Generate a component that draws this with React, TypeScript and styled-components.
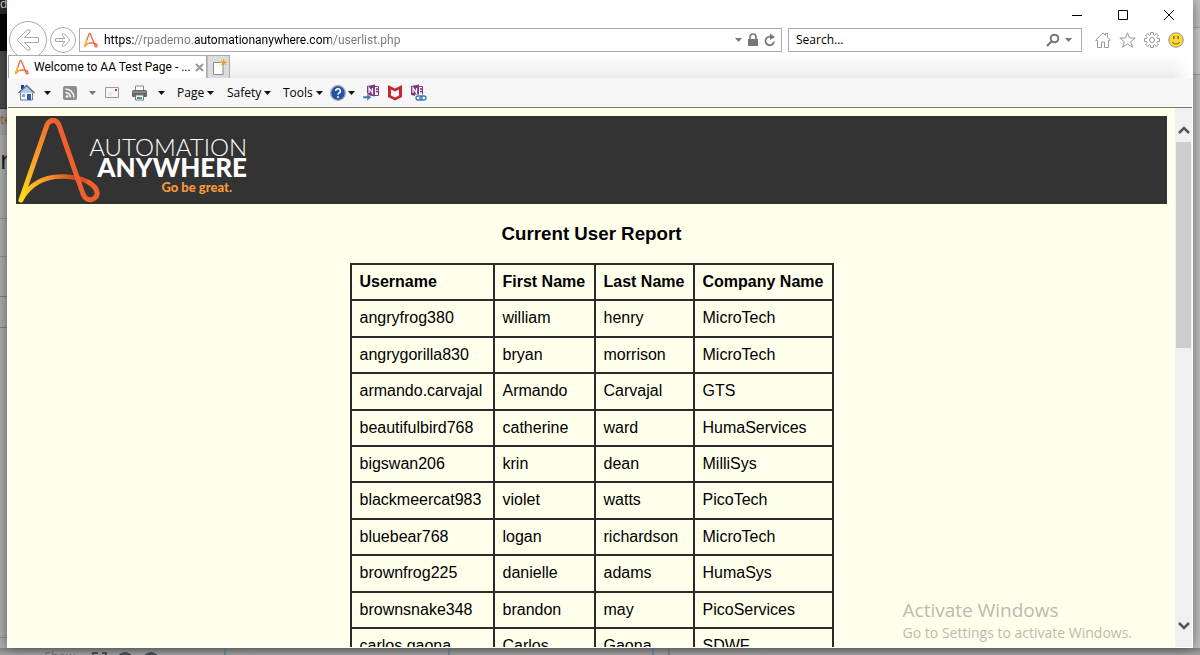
import React from "react";
import styled, { createGlobalStyle } from "styled-components";

const Global = createGlobalStyle`
  *, *::before, *::after { box-sizing: border-box; }
  body { margin: 0; overflow: hidden; background: #a2a2a2; color: #000; font-family: "Open Sans", sans-serif; }
  button { border: 0; padding: 0; margin: 0; background: transparent; color: inherit; font: inherit; }
  svg { display: block; flex: none; }
`;

const Desktop = styled.div`
  height: 100vh;
  display: grid;
  grid-template-columns: 7px minmax(0, 1fr) 7px;
  grid-template-rows: minmax(0, 1fr) 7px;
`;

const Strip = styled.div`
  display: flex;
  flex-direction: column;
  overflow: hidden;
  background: #b0b0b0;
`;

const Slice = styled.div<{ $h: number; $bg: string; $line?: string }>`
  flex: none;
  height: ${p => p.$h}px;
  background: ${p => p.$bg};
  border-bottom: ${p => (p.$line ? `1px solid ${p.$line}` : "0")};
  overflow: hidden;
  white-space: nowrap;
`;

const Peek = styled.span<{ $size: number; $line: number; $color: string }>`
  display: block;
  font-size: ${p => p.$size}px;
  line-height: ${p => p.$line}px;
  color: ${p => p.$color};
`;

const Underbar = styled.div`
  grid-column: 1 / -1;
  display: flex;
  overflow: hidden;
  background: linear-gradient(#868686, #a4a4a4);
`;

const UnderCell = styled.div<{ $w?: number; $line?: string }>`
  flex: ${p => (p.$w ? "none" : "1")};
  width: ${p => (p.$w ? `${p.$w}px` : "auto")};
  display: flex;
  padding-left: 8px;
  gap: 12px;
  border-right: ${p => (p.$line ? `2px solid ${p.$line}` : "0")};
`;

const UnderText = styled.span`
  margin-left: auto;
  padding-right: 9px;
  font-size: 12px;
  line-height: 18px;
  color: #6c6f72;
`;

const Window = styled.main`
  display: flex;
  flex-direction: column;
  min-width: 0;
  padding: 0 1px 1px;
  background: #fff;
  box-shadow: 0 0 12px rgba(0, 0, 0, 0.5);
  z-index: 1;
`;

const TitleBar = styled.header`
  flex: none;
  height: 24px;
  display: flex;
  justify-content: flex-end;
`;

const CaptionButton = styled.button`
  width: 46px;
  height: 30px;
  display: grid;
  place-items: center;
`;

const NavBar = styled.div`
  flex: none;
  height: 31px;
  display: flex;
  align-items: center;
  padding: 0 8px 0 1px;
`;

const RoundButton = styled.button<{ $size: number }>`
  flex: none;
  width: ${p => p.$size}px;
  height: ${p => p.$size}px;
  display: grid;
  place-items: center;
  margin: 0 3px 0 0;
  border: 1px solid #aaa;
  border-radius: 50%;
`;

const Field = styled.form<{ $width?: number }>`
  flex: ${p => (p.$width ? "none" : "1")};
  width: ${p => (p.$width ? `${p.$width}px` : "auto")};
  min-width: 0;
  height: 24px;
  display: flex;
  align-items: center;
  gap: 5px;
  padding: ${p => (p.$width ? "0 9px 0 7px" : "0 5px 0 3px")};
  margin-left: ${p => (p.$width ? 6 : 0)}px;
  border: 1px solid #aaa;
  background: #fff;
`;

const TextBox = styled.input`
  flex: 1;
  min-width: 0;
  height: 20px;
  padding: 0;
  border: 0;
  outline: 0;
  background: transparent;
  color: #000;
  font: 12px "Open Sans", sans-serif;
  &::placeholder { color: #000; opacity: 1; }
`;

const UrlBox = styled(TextBox)`
  font-family: Roboto, sans-serif;
  background: linear-gradient(90deg, #000 0 30px, #777 30px 90px, #000 90px 227px, #777 227px);
  background-clip: text;
  -webkit-background-clip: text;
  color: transparent;
`;

const IconButton = styled.button`
  flex: none;
  display: grid;
  place-items: center;
`;

const Tools = styled.div`
  flex: none;
  display: flex;
  align-items: center;
  gap: 8px;
  margin-left: 13px;
`;

const TabBar = styled.div`
  flex: none;
  height: 23px;
  display: flex;
  background: linear-gradient(90deg, transparent calc(100% - 20px), #fff), linear-gradient(#fff, #ececec);
`;

const Tab = styled.button`
  width: 199px;
  display: flex;
  align-items: center;
  gap: 4px;
  padding: 0 5px;
  border: 1px solid #aaa;
  border-bottom: 0;
  background: #fff;
  font-family: Roboto, sans-serif;
  font-size: 12px;
  line-height: 16px;
  white-space: nowrap;
  z-index: 1;
  & > span { flex: 1; text-align: left; }
`;

const NewTab = styled.button`
  width: 23px;
  display: grid;
  place-items: center;
  border: 1px solid #aaa;
  border-left-color: #bbb;
  border-bottom: 0;
  background: #dcdcdc;
`;

const CommandBar = styled.nav`
  flex: none;
  height: 30px;
  display: flex;
  align-items: center;
  padding-left: 10px;
  background: #f6f6f6;
  border-bottom: 1px solid #777;
`;

const Command = styled.button<{ $w: number; $gap?: number }>`
  flex: none;
  width: ${p => p.$w}px;
  height: 20px;
  display: flex;
  align-items: center;
  gap: ${p => p.$gap ?? 3}px;
  font-size: 12px;
  line-height: 16px;
`;

const Viewport = styled.div`
  flex: 1;
  min-height: 0;
  display: flex;
  background: #ffffec;
`;

const Page = styled.div`
  flex: 1;
  min-width: 0;
  overflow: hidden;
  padding: 8px;
  font-family: "Liberation Sans", Arial, sans-serif;
`;

const Banner = styled.div`
  height: 88px;
  display: flex;
  background: #333;
`;

const Brand = styled.div`
  display: flex;
  flex-direction: column;
  align-items: flex-end;
  width: 147px;
  padding-top: 20px;
  font-family: Lato, sans-serif;
  white-space: nowrap;
`;

const BrandLine = styled.span<{ $size: number; $weight: number }>`
  font-size: ${p => p.$size}px;
  font-weight: ${p => p.$weight};
  line-height: 21px;
  color: #fff;
`;

const Slogan = styled.span`
  margin-right: 15px;
  font-size: 13px;
  font-weight: 900;
  line-height: 18px;
  color: #f7983a;
`;

const Heading = styled.h3`
  margin: 18px 0;
  font-size: 1.17em;
  line-height: 23px;
  text-align: center;
`;

const Report = styled.table`
  margin: 0 auto;
  border-collapse: collapse;
  font-size: 16px;
  line-height: 1.15;
`;

const cell = `
  padding: 8px;
  border: 2px solid #2b2b2b;
  text-align: left;
  white-space: nowrap;
`;
const Th = styled.th<{ $w: number }>`${cell} width: ${p => p.$w}px;`;
const Td = styled.td`${cell}`;

const ScrollTrack = styled.div`
  flex: none;
  width: 17px;
  display: flex;
  flex-direction: column;
  justify-content: space-between;
  padding: 13px 1px;
  background: #f0f0f0;
`;

const ScrollButton = styled.button`
  height: 17px;
  display: grid;
  place-items: center;
`;

const ScrollThumb = styled.div`
  height: 206px;
  margin: 4px 0 auto;
  background: #cdcdcd;
`;

const Watermark = styled.aside`
  position: absolute;
  right: 68px;
  bottom: 12px;
  z-index: 2;
  color: #babab0;
  font-size: 14px;
  line-height: 20px;
  white-space: nowrap;
  pointer-events: none;
`;

const WatermarkTitle = styled.div`
  font-size: 19px;
  line-height: 25px;
`;

const Caret = ({ color = "#111" }: { color?: string }) => (
  <svg width="7" height="4" viewBox="0 0 7 4"><path d="M0 0h7L3.5 4z" fill={color} /></svg>
);

const Favicon = () => (
  <svg width="16" height="16" viewBox="0 0 16 16" fill="none" strokeWidth="1.3" strokeLinecap="round" strokeLinejoin="round">
    <path d="M1.500 14.500 6 2Q6.700.6 7.500 2L12 13.500" stroke="#f0683a" />
    <path d="M2 14Q5 10.500 9.500 11T14 13.500Q14.200 15.200 12.500 14.800L11.500 12.500" stroke="#ef6541" />
    <path d="M1.500 14.500 3.600 8.500M1.500 14.500Q3 12.500 5.500 11.500" stroke="#fbb52b" />
  </svg>
);

const Logo = () => (
  <svg width="84" height="88" viewBox="0 0 84 88" fill="none" strokeLinecap="round" strokeLinejoin="round">
    <defs>
      <linearGradient id="leg" gradientUnits="userSpaceOnUse" x1="4" y1="84" x2="38" y2="4">
        <stop offset="0" stopColor="#ffde17" /><stop offset=".5" stopColor="#f9a02b" /><stop offset="1" stopColor="#f1672a" />
      </linearGradient>
      <linearGradient id="arc" gradientUnits="userSpaceOnUse" x1="4" y1="84" x2="80" y2="70">
        <stop offset="0" stopColor="#ffde17" /><stop offset=".45" stopColor="#f58a2c" /><stop offset=".75" stopColor="#c9491f" /><stop offset="1" stopColor="#f15a2c" />
      </linearGradient>
    </defs>
    <path d="M5 84C16 64 34 60 48 60.500C66 61 81 68 81 77" stroke="url(#arc)" strokeWidth="4.500" />
    <path d="M5 84 31 9Q33 4.500 37.500 4.500" stroke="url(#leg)" strokeWidth="5" />
    <path d="M37.500 4.500Q41 4.500 43 9L67 78Q70 85 76 83.500Q82 81 81 76Q80 71 73 66.500" stroke="#f15f2c" strokeWidth="5" />
  </svg>
);

const columns: [string, number][] = [
  ["Username", 143],
  ["First Name", 101],
  ["Last Name", 99],
  ["Company Name", 139],
];

const rows: [string, string, string, string][] = [
  ["angryfrog380", "william", "henry", "MicroTech"],
  ["angrygorilla830", "bryan", "morrison", "MicroTech"],
  ["armando.carvajal", "Armando", "Carvajal", "GTS"],
  ["beautifulbird768", "catherine", "ward", "HumaServices"],
  ["bigswan206", "krin", "dean", "MilliSys"],
  ["blackmeercat983", "violet", "watts", "PicoTech"],
  ["bluebear768", "logan", "richardson", "MicroTech"],
  ["brownfrog225", "danielle", "adams", "HumaSys"],
  ["brownsnake348", "brandon", "may", "PicoServices"],
  ["carlos.gaona", "Carlos", "Gaona", "SDWF"],
];

const NoteIcon = ({ link = false }: { link?: boolean }) => (
  <svg width="17" height="17" viewBox="0 0 17 17" fill="none">
    <path d={link ? "M7 2.500h5.500v9H7" : "M9 2.500h6.500v9H9"} stroke="#80397b" />
    <path d={link ? "M10 5h2M10 7.500h2" : "M13 5h2M13 7.500h2"} stroke="#80397b" strokeWidth="1.300" />
    <path d={link ? "M1 2 9 .5v12L1 11z" : "M4 2 12 .5v12L4 11z"} fill="#80397b" />
    <path d={link ? "M3 9V4l3.500 5V4" : "M6 9V4l3.500 5V4"} stroke="#fff" strokeWidth="1.200" />
    {link ? (
      <g><path d="M5 10.500h12v6.500H5z" fill="#f6f6f6" /><rect x="6" y="12" width="6" height="4" rx="2" stroke="#3b7bb5" strokeWidth="1.300" /><rect x="10" y="12" width="6" height="4" rx="2" stroke="#3b7bb5" strokeWidth="1.300" /></g>
    ) : (
      <path d="M0 12h4V9.500L8.500 13.200 4 17v-2.500H0z" fill="#3b7bb5" stroke="#f6f6f6" strokeWidth=".5" />
    )}
  </svg>
);

export default function App() {
  return (
    <>
      <Global />
      <Desktop>
        <Strip>
          <Slice $h={14} $bg="#2b2b2b"><Peek $size={12} $line={8} $color="#ddd">d</Peek></Slice>
          <Slice $h={37} $bg="#050505" />
          <Slice $h={58} $bg="#4a4a4a" $line="#333" />
          <Slice $h={26} $bg="#a3a3a3"><Peek $size={12} $line={22} $color="#8a5a3c">te</Peek></Slice>
          <Slice $h={84} $bg="#b0b0b0" $line="#93939b"><Peek $size={26} $line={48} $color="#16202c">r</Peek></Slice>
          <Slice $h={38} $bg="#b0b0b0" $line="#939393" />
          <Slice $h={40} $bg="#b0b0b0" $line="#868686" />
          <Slice $h={31} $bg="#b0b0b0" $line="#868686" />
          <Slice $h={310} $bg="#b0b0b0" $line="#939393" />
        </Strip>
        <Window>
          <TitleBar>
            <CaptionButton aria-label="Minimize"><svg width="10" height="10" viewBox="0 0 10 10"><path d="M0 5.500h10" stroke="#000" /></svg></CaptionButton>
            <CaptionButton aria-label="Maximize"><svg width="10" height="10" viewBox="0 0 10 10"><path d="M.5.5h9v9h-9z" stroke="#000" fill="none" /></svg></CaptionButton>
            <CaptionButton aria-label="Close"><svg width="10" height="10" viewBox="0 0 10 10"><path d="m0 0 10 10M10 0 0 10" stroke="#000" /></svg></CaptionButton>
          </TitleBar>
          <NavBar>
            <RoundButton $size={38} aria-label="Back">
              <svg width="24" height="22" viewBox="0 0 24 22" fill="none" stroke="#aaa"><path d="M1 11 11 1h3v2L8.500 8.500H22.500v5H8.500L14 19v2h-3z" /></svg>
            </RoundButton>
            <RoundButton $size={26} aria-label="Forward">
              <svg width="16" height="14" viewBox="0 0 16 14" fill="none" stroke="#aaa"><path d="M15 7 9.500 1H7.500v1.500L10 5.500H.5v3H10l-2.500 3V13h2z" /></svg>
            </RoundButton>
            <Field>
              <Favicon />
              <UrlBox aria-label="Address" defaultValue="https://rpademo.automationanywhere.com/userlist.php" />
              <IconButton type="button" aria-label="Show addresses"><Caret color="#777" /></IconButton>
              <svg width="12" height="14" viewBox="0 0 12 14"><path d="M3 6V4a3 3 0 0 1 6 0v2" fill="none" stroke="#777" strokeWidth="1.700" /><rect x="1" y="6" width="10" height="7" fill="#777" /></svg>
              <IconButton type="button" aria-label="Refresh">
                <svg width="12" height="14" viewBox="0 0 12 14"><path d="M10 8.500A4.300 4.300 0 1 1 7.500 4" fill="none" stroke="#777" strokeWidth="1.800" /><path d="M6 .5 11 4 6 7z" fill="#777" /></svg>
              </IconButton>
            </Field>
            <Field $width={294}>
              <TextBox aria-label="Search" placeholder="Search..." />
              <IconButton type="button" aria-label="Go">
                <svg width="14" height="14" viewBox="0 0 14 14" fill="none" stroke="#777"><circle cx="8.500" cy="5.500" r="3.800" strokeWidth="2" /><path d="m5.500 8.500-4.500 4.500" strokeWidth="2.300" /></svg>
              </IconButton>
              <IconButton type="button" aria-label="Search options"><Caret color="#777" /></IconButton>
            </Field>
            <Tools>
              <IconButton aria-label="Home"><svg width="16" height="16" viewBox="0 0 16 16" fill="none" stroke="#999"><path d="m.7 8 7.300-7 2.500 2.300V1.500h2v3.700L15.300 8l-1 1-.8-.7v7.200H9.500V10h-3v5.500H2.500V8.300L1.700 9z" /></svg></IconButton>
              <IconButton aria-label="Favorites"><svg width="17" height="16" viewBox="0 0 17 16" fill="none" stroke="#999"><path d="m8.500.8 2 5.200h5.700l-4.500 3.700 1.700 5.500-4.900-3.300-4.900 3.300 1.700-5.500L.8 6h5.700z" /></svg></IconButton>
              <IconButton aria-label="Settings"><svg width="16" height="16" viewBox="0 0 16 16" fill="none" stroke="#999"><circle cx="8" cy="8" r="2.500" /><path d="M6.500.5h3v2l1.300.6 1.500-1.500 2.100 2.100-1.500 1.500.6 1.300h2v3h-2l-.6 1.300 1.500 1.500-2.100 2.100-1.500-1.500-1.300.6v2h-3v-2l-1.300-.6-1.500 1.500-2.100-2.100 1.500-1.500-.6-1.300h-2v-3h2l.6-1.300-1.500-1.500 2.100-2.100 1.500 1.500 1.300-.6z" /></svg></IconButton>
              <IconButton aria-label="Send a smile"><svg width="16" height="16" viewBox="0 0 16 16" fill="none"><circle cx="8" cy="8" r="7.300" fill="#fdd835" stroke="#999" /><path d="M5.800 4v3M10.200 4v3" stroke="#7b6a2a" strokeWidth="1.500" /><path d="M4 10q4 4 8 0" stroke="#7b6a2a" /></svg></IconButton>
            </Tools>
          </NavBar>
          <TabBar>
            <Tab><Favicon /><span>Welcome to AA Test Page - ...</span><svg width="9" height="9" viewBox="0 0 9 9"><path d="m1 1 7 7M8 1 1 8" stroke="#999" strokeWidth="2" /></svg></Tab>
            <NewTab aria-label="New tab"><svg width="16" height="16" viewBox="0 0 16 16"><path d="M2.500 3.500h9.500v12h-9.500z" fill="#fff" stroke="#888" /><path d="M12.500 0v7M9 3.500h7M10 1l5 5M15 1l-5 5" stroke="#f0a020" /></svg></NewTab>
          </TabBar>
          <CommandBar>
            <Command $w={44} $gap={9} aria-label="Home page">
              <svg width="17" height="17" viewBox="0 0 17 17"><path d="M3 1h3v4H3z" fill="#1e3fa8" /><path d="M2.500 8h12v8h-12z" fill="#f4f7fb" stroke="#6b7f9e" /><path d="M.5 9 8.500 1.500 16.500 9" fill="#b9c7dc" stroke="#516a92" strokeWidth="1.300" /><path d="M9 10h4v6H9z" fill="#2c57b5" /><path d="M4 10h3v3H4z" fill="#7fa0d8" /></svg>
              <Caret />
            </Command>
            <Command $w={43} $gap={11} aria-label="Feeds">
              <svg width="16" height="16" viewBox="0 0 16 16"><rect x="1" y="1" width="14" height="14" rx="2" fill="#8d8d8d" /><circle cx="5" cy="11.500" r="1.300" fill="#fff" /><path d="M3.500 7.500a5 5 0 0 1 5 5M3.500 4a8.500 8.500 0 0 1 8.500 8.500" fill="none" stroke="#fff" strokeWidth="1.500" /></svg>
              <Caret color="#777" />
            </Command>
            <Command $w={26} aria-label="Read mail">
              <svg width="14" height="12" viewBox="0 0 14 12"><path d="M.5.5h13v10H.5z" fill="#f6f6f6" stroke="#999" /><path d="M10 2h2v2h-2z" fill="#d22" /><path d="M3 6h5M3 8h4" stroke="#ddd" /></svg>
            </Command>
            <Command $w={46} $gap={10} aria-label="Print">
              <svg width="17" height="16" viewBox="0 0 17 16"><path d="M4.500 1h8v5h-8z" fill="#fff" stroke="#888" /><rect x="1" y="5" width="15" height="7" rx="1.500" fill="#666" /><path d="M2 7h13" stroke="#aaa" /><path d="M4.500 10h8v5h-8z" fill="#fff" stroke="#777" /><path d="M6 12h3v2H6z" fill="#3a86d0" /><path d="M9 12h2v2H9z" fill="#4fae61" /></svg>
              <Caret />
            </Command>
            <Command $w={50}>Page <Caret /></Command>
            <Command $w={56}>Safety <Caret /></Command>
            <Command $w={47}>Tools <Caret /></Command>
            <Command $w={33} $gap={2} aria-label="Help">
              <svg width="16" height="16" viewBox="0 0 16 16"><circle cx="8" cy="8" r="7.300" fill="#2a51a8" stroke="#9aa3b5" strokeWidth="1.300" /><path d="M5.700 6a2.300 2.300 0 1 1 3.300 2.100q-1 .5-1 1.600" fill="none" stroke="#fff" strokeWidth="1.600" /><circle cx="8" cy="12" r="1" fill="#fff" /></svg>
              <Caret />
            </Command>
            <Command $w={24} aria-label="Send to OneNote"><NoteIcon /></Command>
            <Command $w={23} aria-label="McAfee WebAdvisor">
              <svg width="16" height="17" viewBox="0 0 16 17"><path d="m1 1 7 3.500L15 1v12l-7 3.500L1 13z" fill="#c7282d" /><path d="M4 5.500 8 7.500l4-2v6L8 13.500l-4-2z" fill="#f6f6f6" /></svg>
            </Command>
            <Command $w={24} aria-label="OneNote linked notes"><NoteIcon link /></Command>
          </CommandBar>
          <Viewport>
            <Page>
              <Banner>
                <Logo />
                <Brand>
                  <BrandLine $size={24} $weight={300}>AUTOMATION</BrandLine>
                  <BrandLine $size={26} $weight={900}>ANYWHERE</BrandLine>
                  <Slogan>Go be great.</Slogan>
                </Brand>
              </Banner>
              <Heading>Current User Report</Heading>
              <Report>
                <thead><tr>{columns.map(([name, w]) => <Th key={name} $w={w}>{name}</Th>)}</tr></thead>
                <tbody>
                  {rows.map(r => <tr key={r[0]}>{r.map((c, i) => <Td key={i}>{c}</Td>)}</tr>)}
                </tbody>
              </Report>
            </Page>
            <ScrollTrack>
              <ScrollButton aria-label="Scroll up"><svg width="12" height="10" viewBox="0 0 12 10"><path d="m1 8 5-5 5 5" fill="none" stroke="#555" strokeWidth="2.500" /></svg></ScrollButton>
              <ScrollThumb />
              <ScrollButton aria-label="Scroll down"><svg width="12" height="10" viewBox="0 0 12 10"><path d="m1 2 5 5 5-5" fill="none" stroke="#555" strokeWidth="2.500" /></svg></ScrollButton>
            </ScrollTrack>
          </Viewport>
        </Window>
        <Strip>
          <Slice $h={28} $bg="#c4c4c4" $line="#a2a2a2" />
          <Slice $h={47} $bg="#cdcdcd" $line="#a2a2a2" />
          <Slice $h={573} $bg="#c2c2c2" />
        </Strip>
        <Underbar>
          <UnderCell $w={84}><UnderText>Show</UnderText></UnderCell>
          <UnderCell $w={142} $line="#6d8ba3">
            <svg width="66" height="7" viewBox="0 0 66 7" fill="none" stroke="#4b5358" strokeWidth="2">
              <path d="M1 7V5h5M10 5h4v2" /><path d="M28 7q5-4 10 0zM54 7q5-4 10 0z" fill="#4b5358" />
            </svg>
          </UnderCell>
          <UnderCell $w={224} $line="#6d8ba3" />
          <UnderCell $w={204} $line="#6d8ba3" />
          <UnderCell $w={16} $line="#808080" />
          <UnderCell />
        </Underbar>
      </Desktop>
      <Watermark>
        <WatermarkTitle>Activate Windows</WatermarkTitle>
        Go to Settings to activate Windows.
      </Watermark>
    </>
  );
}
